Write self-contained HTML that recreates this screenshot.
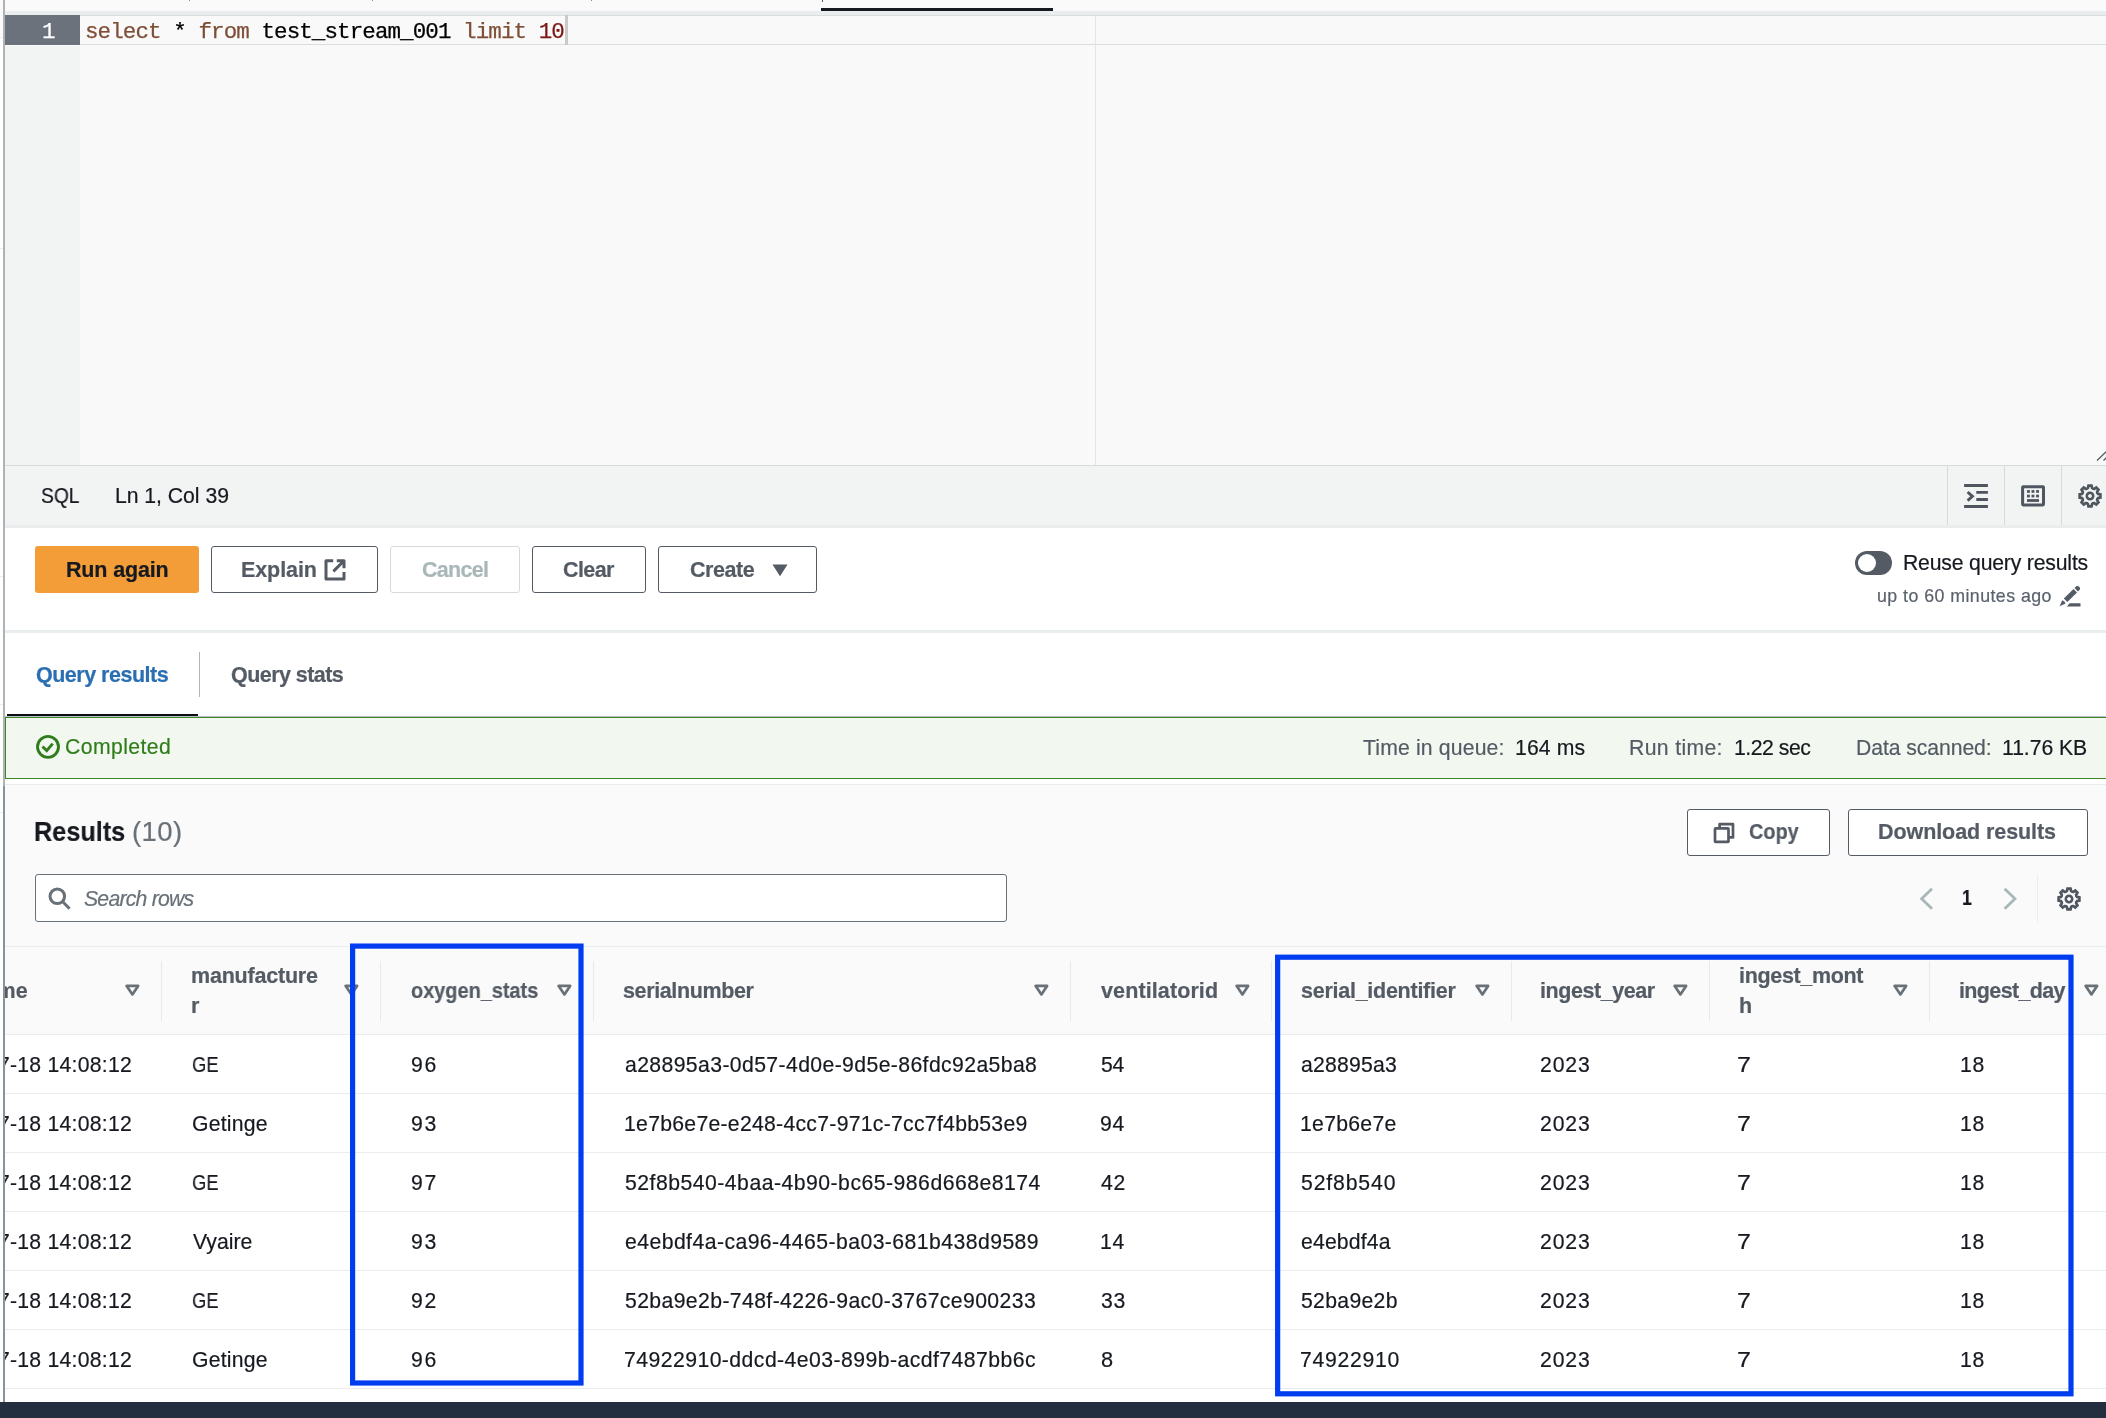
<!DOCTYPE html>
<html><head><meta charset="utf-8"><title>Athena query editor</title>
<style>
html,body{margin:0;padding:0;}
body{width:2106px;height:1418px;position:relative;overflow:hidden;background:#fff;font-family:"Liberation Sans",sans-serif;color:#16191f;}
.a{position:absolute;}
.t{position:absolute;white-space:pre;line-height:1;will-change:transform;-webkit-text-stroke:0.2px;}
.btn{position:absolute;box-sizing:border-box;border:1.5px solid #545b64;border-radius:3px;background:#fff;}
.hd{position:absolute;width:1px;background:#e7eaea;top:961px;height:59.5px;}
.rl{position:absolute;left:5px;right:0;height:1.5px;background:#eaeded;}
.mono{font-family:"Liberation Mono",monospace;-webkit-text-stroke:0.25px;}
</style></head><body>
<!-- left strip -->
<div class="a" style="left:0;top:0;width:3px;height:37px;background:#fafafa"></div>
<div class="a" style="left:0;top:37px;width:3px;height:1px;background:#eceeee"></div><div class="a" style="left:0;top:248px;width:3px;height:1px;background:#eceeee"></div><div class="a" style="left:0;top:576px;width:3px;height:1px;background:#eceeee"></div><div class="a" style="left:0;top:704px;width:3px;height:1px;background:#eceeee"></div><div class="a" style="left:0;top:812px;width:3px;height:1px;background:#eceeee"></div>
<div class="a" style="left:3px;top:0;width:2px;height:786px;background:#adb3b6"></div><div class="a" style="left:3px;top:786px;width:2px;height:616px;background:#87939a"></div>

<!-- top tab strip -->
<div class="a" style="left:5px;top:0;right:0;height:11px;background:#fafafa"></div>
<div class="a" style="left:821px;top:7.6px;width:232px;height:3.6px;background:#16191f"></div>
<div class="a" style="left:5px;top:11px;right:0;height:4.5px;background:#eaeded"></div>

<div class="a" style="left:188.5px;top:0;width:1.3px;height:1.2px;background:#8a9096"></div><div class="a" style="left:371.5px;top:0;width:1.3px;height:1.2px;background:#8a9096"></div><div class="a" style="left:590.5px;top:0;width:1.3px;height:1.2px;background:#8a9096"></div><div class="a" style="left:821.5px;top:0;width:1.5px;height:1.6px;background:#555b62"></div>
<!-- editor -->
<div class="a" style="left:5px;top:15.5px;right:0;height:449.5px;background:#f9f9f9"></div>
<div class="a" style="left:5px;top:15.5px;width:75px;height:449.5px;background:#f2f3f3"></div>
<div class="a" style="left:80px;top:15px;right:0;height:1.3px;background:#d9dddd"></div>
<div class="a" style="left:80px;top:43.8px;right:0;height:1.3px;background:#d9dddd"></div>
<div class="a" style="left:5px;top:15px;width:75px;height:29.5px;background:#6b727c"></div><div class="a" style="left:5px;top:44.5px;width:75px;height:1px;background:#fbfbfb"></div>
<div class="a" style="left:1094.5px;top:15.5px;width:1.6px;height:449.5px;background:#e4e5e5"></div>
<div class="a" style="left:564.7px;top:15px;width:2.9px;height:29.8px;background:#c9caca"></div>
<span class="t mono" style="left:42.2px;top:20.5px;font-size:22.5px;color:#fff">1</span>
<span class="t mono" style="left:84.8px;top:20.5px;font-size:22.5px;letter-spacing:-0.9px;color:#000"><span style="color:#7f4e37">select</span> * <span style="color:#7f4e37">from</span> test_stream_001 <span style="color:#7f4e37">limit</span> <span style="color:#7c1616">10</span></span>
<!-- resize grip -->
<svg class="a" style="left:2095px;top:446px" width="14" height="16" viewBox="0 0 14 16"><path d="M2 14.5 L14 3 M8.5 14.5 L14 9.2" stroke="#50565c" stroke-width="1.2" fill="none"/></svg>

<!-- status bar -->
<div class="a" style="left:5px;top:465px;right:0;height:60.5px;background:#f2f3f3;border-top:1.3px solid #d5dbdb;box-sizing:border-box"></div>
<div class="a" style="left:5px;top:525px;right:0;height:3px;background:#eaeded"></div>
<div class="a" style="left:1947px;top:466px;width:1.3px;height:59px;background:#d5dbdb"></div>
<div class="a" style="left:2004px;top:466px;width:1.3px;height:59px;background:#d5dbdb"></div>
<div class="a" style="left:2061px;top:466px;width:1.3px;height:59px;background:#d5dbdb"></div>
<!-- indent icon -->
<svg class="a" style="left:1960px;top:480px" width="32" height="32" viewBox="0 0 32 32" fill="none" stroke="#4f5660" stroke-width="2.9">
<path d="M4.1 5.5H27.9M16.3 12.4H27.9M16.3 19.5H27.9M4.1 26.5H27.9"/><path d="M7.6 12 L12.4 16.3 L7.6 20.6" stroke-linejoin="miter"/></svg>
<!-- keyboard icon -->
<svg class="a" style="left:2017px;top:480px" width="32" height="32" viewBox="0 0 32 32"><rect x="5.6" y="6.7" width="20.9" height="18.2" rx="0.6" fill="none" stroke="#4f5660" stroke-width="3" stroke-linejoin="round"/>
<g fill="#4f5660"><rect x="10" y="10.1" width="2.9" height="2.7"/><rect x="14.5" y="10.1" width="2.9" height="2.7"/><rect x="19.1" y="10.1" width="2.9" height="2.7"/><rect x="10" y="14.7" width="2.9" height="2.7"/><rect x="14.5" y="14.7" width="2.9" height="2.7"/><rect x="19.1" y="14.7" width="2.9" height="2.7"/><rect x="10" y="19.1" width="12" height="2.8"/></g></svg>
<!-- gear icon (status) -->
<svg class="a" style="left:2074px;top:480px" width="32" height="32" viewBox="-16 -16 32 32"><use href="#gear"/></svg>

<!-- action area -->
<div class="a" style="left:35px;top:546px;width:164px;height:47px;background:#f29d38;border-radius:3px"></div>
<div class="btn" style="left:211px;top:546px;width:167px;height:47px"></div>
<div class="btn" style="left:390px;top:546px;width:130px;height:47px;border-color:#d5dbdb"></div>
<div class="btn" style="left:532px;top:546px;width:114px;height:47px"></div>
<div class="btn" style="left:658px;top:546px;width:159px;height:47px"></div>
<!-- external link icon -->
<svg class="a" style="left:322px;top:557px" width="26" height="26" viewBox="0 0 26 26" fill="none" stroke="#545b64" stroke-width="3" stroke-linejoin="round"><path d="M11.2 3.8H4V22H22V15"/><path d="M14.8 3.8H22V11.2M22 3.8L11.4 14.4"/></svg>
<!-- caret down -->
<svg class="a" style="left:772px;top:564px" width="16" height="13" viewBox="0 0 16 13"><path d="M0.5 0.5H15.5L8 12.3Z" fill="#545b64"/></svg>
<!-- toggle -->
<div class="a" style="left:1855px;top:551px;width:36.5px;height:24px;border-radius:12px;background:#545b64"></div>
<div class="a" style="left:1858px;top:554px;width:18px;height:18px;border-radius:9px;background:#fff"></div>
<!-- pencil -->
<svg class="a" style="left:2058px;top:584px" width="24" height="24" viewBox="0 0 24 24" fill="#545b64"><g transform="translate(1.6 22.2) rotate(-44.6)"><path d="M0 0 L6.1 -2.35 Q7 0 6.1 2.35 Z"/><rect x="8.4" y="-2.5" width="13.6" height="5"/><path d="M23.4 -2.5 H25.8 A2.6 2.6 0 0 1 25.8 2.5 H23.4 Z"/></g><path d="M11.7 19.2 H22.5 V22.4 H8.8 Z"/></svg>

<div class="a" style="left:5px;top:630px;right:0;height:3px;background:#eaeded"></div>
<!-- tabs -->
<div class="a" style="left:199px;top:652px;width:1.3px;height:45px;background:#aab7b8"></div>
<div class="a" style="left:5px;top:716px;right:0;height:1px;background:#b7bec6"></div><div class="a" style="left:7px;top:714px;width:191px;height:2px;background:#0b0d12"></div>
<!-- alert -->
<div class="a" style="left:5px;top:717px;width:2120px;height:62px;box-sizing:border-box;border:1.5px solid #3f8624;background:#f2f8f0"></div>
<svg class="a" style="left:34px;top:733px" width="28" height="28" viewBox="0 0 28 28" fill="none" stroke="#2f7d1a" stroke-width="2.9"><circle cx="14" cy="13.85" r="10.5"/><path d="M8.5 13.4 L12.7 17.7 L18.7 10.6"/></svg>

<!-- results container -->
<div class="a" style="left:5px;top:784px;right:0;height:163px;background:#fafafa;border-top:1.3px solid #eaeded;box-sizing:border-box"></div>
<div class="btn" style="left:35px;top:874px;width:972px;height:48px;border-color:#687078"></div>
<svg class="a" style="left:46px;top:885px" width="28" height="28" viewBox="0 0 28 28" fill="none" stroke="#687078" stroke-width="3"><circle cx="11.3" cy="11.3" r="7.3"/><path d="M16.5 16.5 L23.6 23.8"/></svg>
<div class="btn" style="left:1687px;top:809px;width:143px;height:47px"></div>
<div class="btn" style="left:1848px;top:809px;width:240px;height:47px"></div>
<!-- copy icon -->
<svg class="a" style="left:1711px;top:820px" width="26" height="26" viewBox="0 0 26 26" fill="none" stroke="#545b64" stroke-width="2.7" stroke-linejoin="round"><rect x="4" y="8.4" width="13.5" height="13.5" rx="0.6"/><path d="M8.6 8V4.2H22V17.4H17.6"/></svg>
<!-- pagination -->
<svg class="a" style="left:1916px;top:884px" width="20" height="30" viewBox="0 0 20 30" fill="none" stroke="#aab7b8" stroke-width="2.8"><path d="M16 4.8 L5.6 14.8 L16 24.8"/></svg>
<svg class="a" style="left:2000px;top:884px" width="20" height="30" viewBox="0 0 20 30" fill="none" stroke="#aab7b8" stroke-width="2.8"><path d="M4.6 4.8 L15 14.8 L4.6 24.8"/></svg>
<div class="a" style="left:2037px;top:875px;width:1.3px;height:47px;background:#eaeded"></div>
<svg class="a" style="left:2053px;top:883px" width="32" height="32" viewBox="-16 -16 32 32"><use href="#gear"/></svg>

<!-- table -->
<div class="a" style="left:5px;top:946px;right:0;height:88.5px;background:#fafafa;border-top:1.5px solid #eaeded;border-bottom:1.5px solid #eaeded;box-sizing:border-box"></div>
<div class="hd" style="left:161px"></div><div class="hd" style="left:380px"></div><div class="hd" style="left:593px"></div><div class="hd" style="left:1070.1px"></div><div class="hd" style="left:1270.8px"></div><div class="hd" style="left:1511.4px"></div><div class="hd" style="left:1708.5px"></div><div class="hd" style="left:1929.1px"></div>
<div class="rl" style="top:1092.6px"></div><div class="rl" style="top:1151.6px"></div><div class="rl" style="top:1210.6px"></div><div class="rl" style="top:1269.6px"></div><div class="rl" style="top:1328.6px"></div><div class="rl" style="top:1387.6px"></div>
<svg class="a" style="left:124.6px;top:984.4px" width="16" height="13" viewBox="0 0 16 13"><path d="M1.7 1.9H13.1L7.4 10.4Z" fill="none" stroke="#687078" stroke-width="2.7" stroke-linejoin="round"/></svg><svg class="a" style="left:343.5px;top:984.4px" width="16" height="13" viewBox="0 0 16 13"><path d="M1.7 1.9H13.1L7.4 10.4Z" fill="none" stroke="#687078" stroke-width="2.7" stroke-linejoin="round"/></svg><svg class="a" style="left:556.7px;top:984.4px" width="16" height="13" viewBox="0 0 16 13"><path d="M1.7 1.9H13.1L7.4 10.4Z" fill="none" stroke="#687078" stroke-width="2.7" stroke-linejoin="round"/></svg><svg class="a" style="left:1033.8px;top:984.4px" width="16" height="13" viewBox="0 0 16 13"><path d="M1.7 1.9H13.1L7.4 10.4Z" fill="none" stroke="#687078" stroke-width="2.7" stroke-linejoin="round"/></svg><svg class="a" style="left:1234.7px;top:984.4px" width="16" height="13" viewBox="0 0 16 13"><path d="M1.7 1.9H13.1L7.4 10.4Z" fill="none" stroke="#687078" stroke-width="2.7" stroke-linejoin="round"/></svg><svg class="a" style="left:1475.0px;top:984.4px" width="16" height="13" viewBox="0 0 16 13"><path d="M1.7 1.9H13.1L7.4 10.4Z" fill="none" stroke="#687078" stroke-width="2.7" stroke-linejoin="round"/></svg><svg class="a" style="left:1672.5px;top:984.4px" width="16" height="13" viewBox="0 0 16 13"><path d="M1.7 1.9H13.1L7.4 10.4Z" fill="none" stroke="#687078" stroke-width="2.7" stroke-linejoin="round"/></svg><svg class="a" style="left:1892.7px;top:984.4px" width="16" height="13" viewBox="0 0 16 13"><path d="M1.7 1.9H13.1L7.4 10.4Z" fill="none" stroke="#687078" stroke-width="2.7" stroke-linejoin="round"/></svg><svg class="a" style="left:2083.6px;top:984.4px" width="16" height="13" viewBox="0 0 16 13"><path d="M1.7 1.9H13.1L7.4 10.4Z" fill="none" stroke="#687078" stroke-width="2.7" stroke-linejoin="round"/></svg>
<span class="t" style="left:40.8px;top:485.1px;font-size:21.2px;transform-origin:0 0;transform:scaleX(0.908);">SQL</span>
<span class="t" style="left:114.9px;top:485.1px;font-size:21.2px;letter-spacing:-0.03px;">Ln 1, Col 39</span>
<span class="t" style="left:65.5px;top:559.9px;font-size:21.5px;font-weight:700;letter-spacing:-0.16px;">Run again</span>
<span class="t" style="left:241.0px;top:559.9px;font-size:21.5px;font-weight:700;color:#545b64;letter-spacing:-0.09px;">Explain</span>
<span class="t" style="left:422.2px;top:559.9px;font-size:21.5px;font-weight:700;color:#aab7b8;letter-spacing:-0.71px;">Cancel</span>
<span class="t" style="left:563.2px;top:559.9px;font-size:21.5px;font-weight:700;color:#545b64;letter-spacing:-0.60px;">Clear</span>
<span class="t" style="left:690.0px;top:559.9px;font-size:21.5px;font-weight:700;color:#545b64;letter-spacing:-0.43px;">Create</span>
<span class="t" style="left:1903.4px;top:552.1px;font-size:21.2px;letter-spacing:-0.18px;">Reuse query results</span>
<span class="t" style="left:1876.8px;top:587.9px;font-size:17.8px;color:#5a626c;letter-spacing:0.44px;">up to 60 minutes ago</span>
<span class="t" style="left:36.0px;top:664.9px;font-size:21.5px;font-weight:700;color:#2a6fb3;letter-spacing:-0.50px;">Query results</span>
<span class="t" style="left:230.8px;top:664.9px;font-size:21.5px;font-weight:700;color:#545b64;letter-spacing:-0.56px;">Query stats</span>
<span class="t" style="left:65.0px;top:736.4px;font-size:21.2px;color:#2f7d1a;letter-spacing:0.42px;">Completed</span>
<span class="t" style="left:1363.0px;top:736.6px;font-size:21.2px;color:#545b64;letter-spacing:0.16px;">Time in queue:</span>
<span class="t" style="left:1515.4px;top:736.6px;font-size:21.2px;letter-spacing:0.10px;">164 ms</span>
<span class="t" style="left:1629.3px;top:736.6px;font-size:21.2px;color:#545b64;letter-spacing:0.35px;">Run time:</span>
<span class="t" style="left:1733.7px;top:736.6px;font-size:21.2px;letter-spacing:-0.46px;">1.22 sec</span>
<span class="t" style="left:1855.5px;top:736.6px;font-size:21.2px;color:#545b64;letter-spacing:-0.08px;">Data scanned:</span>
<span class="t" style="left:2001.8px;top:736.6px;font-size:21.2px;letter-spacing:-0.07px;">11.76 KB</span>
<span class="t" style="left:34.1px;top:817.7px;font-size:27.5px;font-weight:700;transform-origin:0 0;transform:scaleX(0.918);">Results</span>
<span class="t" style="left:132.0px;top:817.7px;font-size:27.5px;color:#687078;letter-spacing:0.42px;">(10)</span>
<span class="t" style="left:84.0px;top:887.5px;font-size:21.2px;color:#687078;font-style:italic;letter-spacing:-0.76px;">Search rows</span>
<span class="t" style="left:1749.0px;top:822.3px;font-size:21.5px;font-weight:700;color:#545b64;transform-origin:0 0;transform:scaleX(0.924);">Copy</span>
<span class="t" style="left:1878.4px;top:822.3px;font-size:21.5px;font-weight:700;color:#545b64;letter-spacing:-0.08px;">Download results</span>
<span class="t" style="left:1962.2px;top:888.1px;font-size:21.5px;font-weight:700;transform-origin:0 0;transform:scaleX(0.818);">1</span>
<span class="t" style="left:191.1px;top:965.9px;font-size:21.5px;font-weight:700;color:#545b64;letter-spacing:-0.21px;">manufacture</span>
<span class="t" style="left:191.1px;top:995.9px;font-size:21.5px;font-weight:700;color:#545b64;">r</span>
<span class="t" style="left:411.2px;top:980.8px;font-size:21.5px;font-weight:700;color:#545b64;transform-origin:0 0;transform:scaleX(0.926);">oxygen_stats</span>
<span class="t" style="left:623.4px;top:980.8px;font-size:21.5px;font-weight:700;color:#545b64;letter-spacing:-0.37px;">serialnumber</span>
<span class="t" style="left:1100.7px;top:980.8px;font-size:21.5px;font-weight:700;color:#545b64;letter-spacing:0.11px;">ventilatorid</span>
<span class="t" style="left:1301.4px;top:980.8px;font-size:21.5px;font-weight:700;color:#545b64;letter-spacing:-0.26px;">serial_identifier</span>
<span class="t" style="left:1540.0px;top:980.8px;font-size:21.5px;font-weight:700;color:#545b64;letter-spacing:-0.44px;">ingest_year</span>
<span class="t" style="left:1739.0px;top:965.9px;font-size:21.5px;font-weight:700;color:#545b64;letter-spacing:-0.33px;">ingest_mont</span>
<span class="t" style="left:1739.0px;top:995.9px;font-size:21.5px;font-weight:700;color:#545b64;">h</span>
<span class="t" style="left:1958.8px;top:980.8px;font-size:21.5px;font-weight:700;color:#545b64;letter-spacing:-0.64px;">ingest_day</span>
<span class="t" style="left:10.4px;top:1054.1px;font-size:21.2px;letter-spacing:0.25px;">-18 14:08:12</span>
<span class="t" style="left:191.9px;top:1054.1px;font-size:21.2px;transform-origin:0 0;transform:scaleX(0.868);">GE</span>
<span class="t" style="left:411.0px;top:1054.1px;font-size:21.2px;letter-spacing:1.62px;">96</span>
<span class="t" style="left:624.9px;top:1054.1px;font-size:21.2px;letter-spacing:0.39px;">a28895a3-0d57-4d0e-9d5e-86fdc92a5ba8</span>
<span class="t" style="left:1101.2px;top:1054.1px;font-size:21.2px;letter-spacing:-0.18px;">54</span>
<span class="t" style="left:1301.2px;top:1054.1px;font-size:21.2px;letter-spacing:0.20px;">a28895a3</span>
<span class="t" style="left:1539.8px;top:1054.1px;font-size:21.2px;letter-spacing:0.85px;">2023</span>
<span class="t" style="left:1736.5px;top:1054.1px;font-size:21.2px;transform-origin:0 0;transform:scaleX(1.180);">7</span>
<span class="t" style="left:1959.5px;top:1054.1px;font-size:21.2px;letter-spacing:0.62px;">18</span>
<span class="t" style="left:10.4px;top:1113.1px;font-size:21.2px;letter-spacing:0.25px;">-18 14:08:12</span>
<span class="t" style="left:191.8px;top:1113.1px;font-size:21.2px;letter-spacing:0.23px;">Getinge</span>
<span class="t" style="left:411.0px;top:1113.1px;font-size:21.2px;letter-spacing:1.62px;">93</span>
<span class="t" style="left:623.9px;top:1113.1px;font-size:21.2px;letter-spacing:0.28px;">1e7b6e7e-e248-4cc7-971c-7cc7f4bb53e9</span>
<span class="t" style="left:1100.2px;top:1113.1px;font-size:21.2px;letter-spacing:0.82px;">94</span>
<span class="t" style="left:1300.2px;top:1113.1px;font-size:21.2px;letter-spacing:0.29px;">1e7b6e7e</span>
<span class="t" style="left:1539.8px;top:1113.1px;font-size:21.2px;letter-spacing:0.85px;">2023</span>
<span class="t" style="left:1736.5px;top:1113.1px;font-size:21.2px;transform-origin:0 0;transform:scaleX(1.180);">7</span>
<span class="t" style="left:1959.5px;top:1113.1px;font-size:21.2px;letter-spacing:0.62px;">18</span>
<span class="t" style="left:10.4px;top:1172.1px;font-size:21.2px;letter-spacing:0.25px;">-18 14:08:12</span>
<span class="t" style="left:191.9px;top:1172.1px;font-size:21.2px;transform-origin:0 0;transform:scaleX(0.868);">GE</span>
<span class="t" style="left:411.0px;top:1172.1px;font-size:21.2px;letter-spacing:1.62px;">97</span>
<span class="t" style="left:624.9px;top:1172.1px;font-size:21.2px;letter-spacing:0.49px;">52f8b540-4baa-4b90-bc65-986d668e8174</span>
<span class="t" style="left:1101.2px;top:1172.1px;font-size:21.2px;letter-spacing:0.82px;">42</span>
<span class="t" style="left:1301.2px;top:1172.1px;font-size:21.2px;letter-spacing:0.87px;">52f8b540</span>
<span class="t" style="left:1539.8px;top:1172.1px;font-size:21.2px;letter-spacing:0.85px;">2023</span>
<span class="t" style="left:1736.5px;top:1172.1px;font-size:21.2px;transform-origin:0 0;transform:scaleX(1.180);">7</span>
<span class="t" style="left:1959.5px;top:1172.1px;font-size:21.2px;letter-spacing:0.62px;">18</span>
<span class="t" style="left:10.4px;top:1231.1px;font-size:21.2px;letter-spacing:0.25px;">-18 14:08:12</span>
<span class="t" style="left:192.8px;top:1231.1px;font-size:21.2px;">Vyaire</span>
<span class="t" style="left:411.0px;top:1231.1px;font-size:21.2px;letter-spacing:1.62px;">93</span>
<span class="t" style="left:624.9px;top:1231.1px;font-size:21.2px;letter-spacing:0.44px;">e4ebdf4a-ca96-4465-ba03-681b438d9589</span>
<span class="t" style="left:1100.2px;top:1231.1px;font-size:21.2px;letter-spacing:0.82px;">14</span>
<span class="t" style="left:1301.2px;top:1231.1px;font-size:21.2px;letter-spacing:0.17px;">e4ebdf4a</span>
<span class="t" style="left:1539.8px;top:1231.1px;font-size:21.2px;letter-spacing:0.85px;">2023</span>
<span class="t" style="left:1736.5px;top:1231.1px;font-size:21.2px;transform-origin:0 0;transform:scaleX(1.180);">7</span>
<span class="t" style="left:1959.5px;top:1231.1px;font-size:21.2px;letter-spacing:0.62px;">18</span>
<span class="t" style="left:10.4px;top:1290.1px;font-size:21.2px;letter-spacing:0.25px;">-18 14:08:12</span>
<span class="t" style="left:191.9px;top:1290.1px;font-size:21.2px;transform-origin:0 0;transform:scaleX(0.868);">GE</span>
<span class="t" style="left:411.0px;top:1290.1px;font-size:21.2px;letter-spacing:1.62px;">92</span>
<span class="t" style="left:624.9px;top:1290.1px;font-size:21.2px;letter-spacing:0.39px;">52ba9e2b-748f-4226-9ac0-3767ce900233</span>
<span class="t" style="left:1101.2px;top:1290.1px;font-size:21.2px;letter-spacing:0.82px;">33</span>
<span class="t" style="left:1301.2px;top:1290.1px;font-size:21.2px;letter-spacing:0.32px;">52ba9e2b</span>
<span class="t" style="left:1539.8px;top:1290.1px;font-size:21.2px;letter-spacing:0.85px;">2023</span>
<span class="t" style="left:1736.5px;top:1290.1px;font-size:21.2px;transform-origin:0 0;transform:scaleX(1.180);">7</span>
<span class="t" style="left:1959.5px;top:1290.1px;font-size:21.2px;letter-spacing:0.62px;">18</span>
<span class="t" style="left:10.4px;top:1349.1px;font-size:21.2px;letter-spacing:0.25px;">-18 14:08:12</span>
<span class="t" style="left:191.8px;top:1349.1px;font-size:21.2px;letter-spacing:0.23px;">Getinge</span>
<span class="t" style="left:411.0px;top:1349.1px;font-size:21.2px;letter-spacing:1.62px;">96</span>
<span class="t" style="left:623.9px;top:1349.1px;font-size:21.2px;letter-spacing:0.45px;">74922910-ddcd-4e03-899b-acdf7487bb6c</span>
<span class="t" style="left:1101.2px;top:1349.1px;font-size:21.2px;transform-origin:0 0;transform:scaleX(1.027);">8</span>
<span class="t" style="left:1300.2px;top:1349.1px;font-size:21.2px;letter-spacing:0.73px;">74922910</span>
<span class="t" style="left:1539.8px;top:1349.1px;font-size:21.2px;letter-spacing:0.85px;">2023</span>
<span class="t" style="left:1736.5px;top:1349.1px;font-size:21.2px;transform-origin:0 0;transform:scaleX(1.180);">7</span>
<span class="t" style="left:1959.5px;top:1349.1px;font-size:21.2px;letter-spacing:0.62px;">18</span>
<!-- first column header + clipped first chars -->
<div class="a" style="left:4.6px;top:946px;width:40px;height:460px;overflow:hidden">
<span class="t" style="right:17.0px;top:34.8px;font-size:21.5px;font-weight:700;color:#545b64;letter-spacing:0.2px">time</span>
<span class="t" style="right:34.6px;top:108.1px;font-size:21.2px;letter-spacing:0.3px">07</span>
<span class="t" style="right:34.6px;top:167.1px;font-size:21.2px;letter-spacing:0.3px">07</span>
<span class="t" style="right:34.6px;top:226.1px;font-size:21.2px;letter-spacing:0.3px">07</span>
<span class="t" style="right:34.6px;top:285.1px;font-size:21.2px;letter-spacing:0.3px">07</span>
<span class="t" style="right:34.6px;top:344.1px;font-size:21.2px;letter-spacing:0.3px">07</span>
<span class="t" style="right:34.6px;top:403.1px;font-size:21.2px;letter-spacing:0.3px">07</span>
</div>
<!-- blue annotation rectangles -->
<svg class="a" style="left:0;top:0" width="2106" height="1418" viewBox="0 0 2106 1418" fill="none" stroke="#003cf0" stroke-width="5.2"><rect x="352.6" y="946.1" width="228.4" height="436.9"/><rect x="1277.65" y="957.2" width="793.35" height="436.6"/></svg>
<!-- footer -->
<div class="a" style="left:0;top:1402px;width:2106px;height:16px;background:#232f3e"></div>

<svg width="0" height="0" style="position:absolute"><defs>
<g id="gear"><path fill="none" stroke="#4f5660" stroke-width="2.7" stroke-linejoin="miter" d="M-1.55 -10.38L1.55 -10.38L2.08 -8.04Q2.87 -6.93 4.21 -7.15L6.25 -8.44L8.44 -6.25L7.15 -4.21Q6.93 -2.87 8.04 -2.08L10.38 -1.55L10.38 1.55L8.04 2.08Q6.93 2.87 7.15 4.21L8.44 6.25L6.25 8.44L4.21 7.15Q2.87 6.93 2.08 8.04L1.55 10.38L-1.55 10.38L-2.08 8.04Q-2.87 6.93 -4.21 7.15L-6.25 8.44L-8.44 6.25L-7.15 4.21Q-6.93 2.87 -8.04 2.08L-10.38 1.55L-10.38 -1.55L-8.04 -2.08Q-6.93 -2.87 -7.15 -4.21L-8.44 -6.25L-6.25 -8.44L-4.21 -7.15Q-2.87 -6.93 -2.08 -8.04Z"/><circle cx="0" cy="0" r="3.2" fill="none" stroke="#4f5660" stroke-width="2.6"/></g>
</defs></svg>
</body></html>
